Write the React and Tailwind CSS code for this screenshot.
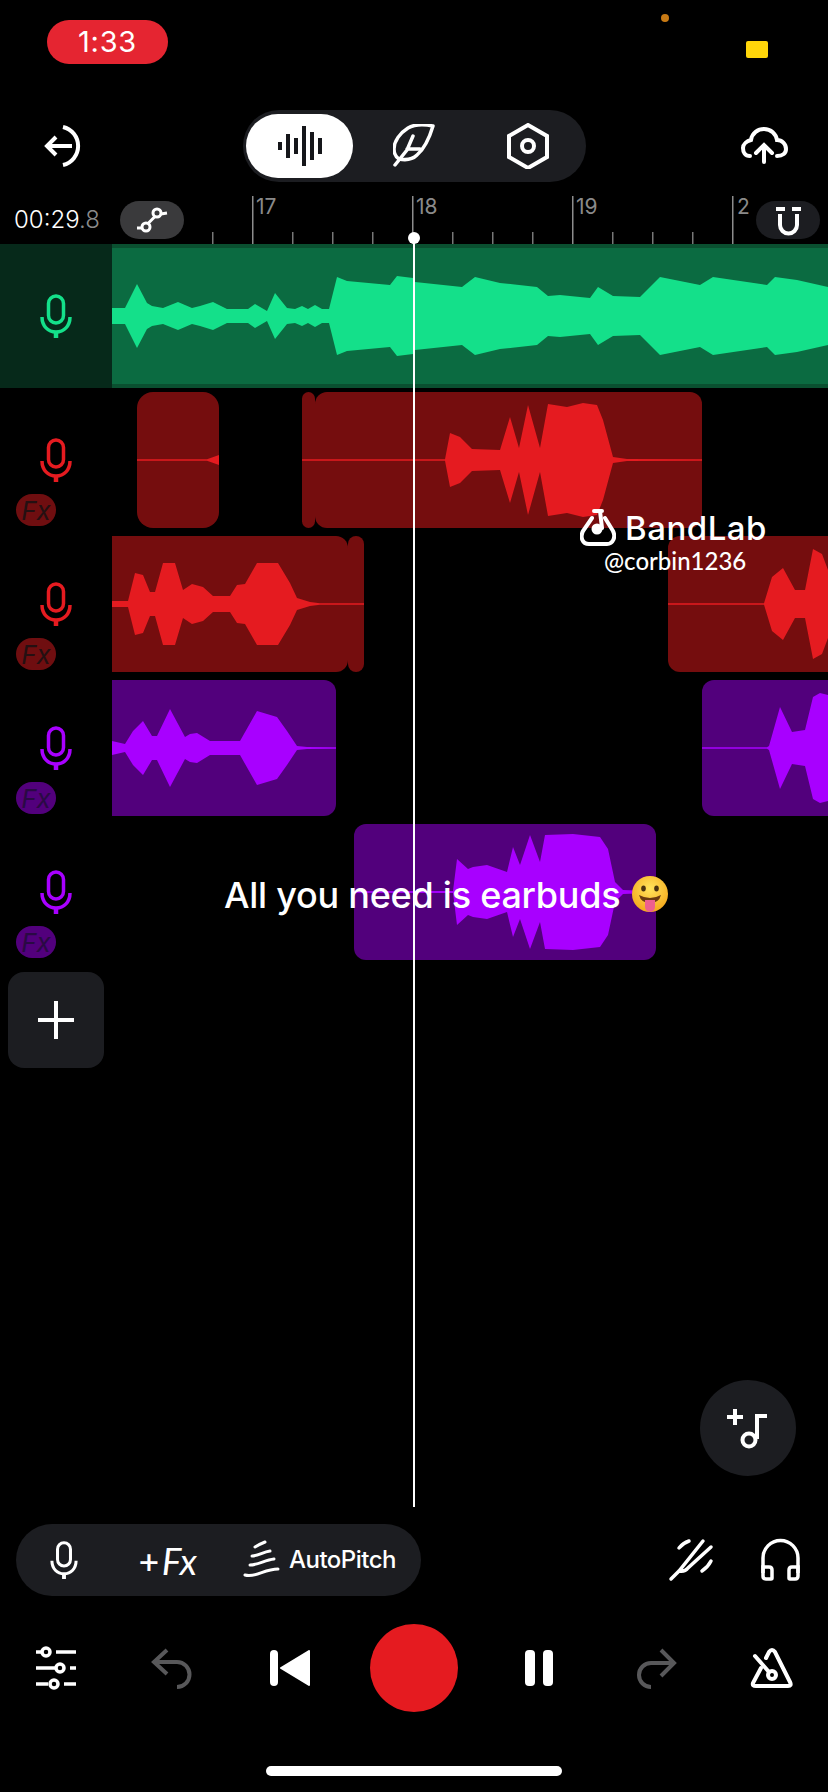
import React from "react";

const sans = "font-['Inter','Liberation_Sans',sans-serif]";

// waveforms: [screen x, half height], mirrored around the clip centre
const shape = (pts) => {
  const top = pts.map(([x, h]) => `${x} ${-h}`);
  const bottom = [...pts].reverse().map(([x, h]) => `${x} ${h}`);
  return `M${top.join("L")}L${bottom.join("L")}Z`;
};

const greenWave = [
  [112, 8], [125, 8], [137, 32], [147, 13], [152, 10], [163, 8], [178, 14], [192, 8], [200, 10], [213, 14],
  [227, 7], [248, 7], [255, 12], [267, 5], [275, 23], [287, 8], [295, 7], [302, 10], [308, 7], [315, 11],
  [322, 7], [329, 7], [337, 39], [347, 35], [390, 31], [397, 40], [413, 38], [415, 34], [462, 29], [475, 39],
  [500, 33], [537, 29], [548, 20], [560, 21], [590, 18], [598, 29], [613, 20], [640, 19], [660, 39], [700, 31],
  [713, 39], [767, 31], [775, 39], [797, 36], [828, 29],
];
const redWave1 = [
  [137, 0.75], [207, 0.75], [219, 5],
];
const redWave2 = [
  [302, 0.75], [315, 0.75], [445, 0.75], [450, 27], [460, 23], [472, 11], [500, 10], [510, 43], [519, 12],
  [528, 55], [540, 12], [548, 56], [567, 53], [583, 57], [597, 55], [603, 40], [613, 3], [627, 1], [702, 0.75],
];
const redWave3 = [
  [112, 3], [128, 3], [135, 31], [143, 29], [150, 12], [155, 12], [163, 41], [175, 41], [183, 14], [192, 20],
  [203, 17], [213, 8], [230, 8], [237, 19], [245, 20], [257, 41], [278, 41], [290, 21], [297, 6], [310, 2],
  [320, 0.75], [348, 0.75],
];
const redWave4 = [
  [668, 0.75], [764, 0.75], [772, 27], [783, 36], [795, 14], [805, 14], [813, 55], [822, 50], [828, 34],
];
const purpleWave1 = [
  [112, 7], [125, 4], [133, 17], [143, 27], [152, 12], [157, 12], [170, 39], [185, 11], [190, 14], [197, 15],
  [210, 7], [240, 7], [257, 37], [277, 31], [287, 17], [297, 2], [307, 1], [336, 0.75],
];
const purpleWave2 = [
  [702, 0.75], [767, 0.75], [769, 2], [780, 41], [792, 16], [805, 18], [813, 51], [820, 55], [828, 53],
];
const purpleWave3 = [
  [354, 0.75], [453, 1], [457, 33], [468, 23], [473, 25], [487, 27], [507, 20], [513, 45], [520, 27], [530, 57],
  [540, 30], [545, 57], [573, 58], [600, 55], [608, 43], [615, 10], [623, 2], [656, 0.75],
];

const Clip = ({ className, x, w, points, fill }) => (
  <div className={`h-[136px] shrink-0 overflow-hidden ${className}`}>
    <svg viewBox={`${x} -68 ${w} 136`} className="block w-full h-full">
      <path d={shape(points)} fill={fill} />
    </svg>
  </div>
);

const Mic = ({ className, color }) => (
  <svg viewBox="0 0 32 44" fill="none" stroke={color} strokeWidth="3.5" className={className}>
    <rect x="8.5" y="2" width="15" height="27" rx="7.5" />
    <path d="M2 23c0 9 6 15 14 15s14-6 14-15" />
    <path d="M16 38v6" strokeWidth="4.5" />
  </svg>
);

const TrackHead = ({ color, fxBg, fxText }) => (
  <div className="relative w-[112px] h-[144px] shrink-0 flex justify-center items-center">
    <Mic className="w-8 h-11" color={color} />
    <div className={`absolute left-4 top-[106px] w-10 h-8 rounded-full flex items-center justify-center text-[26px] italic ${sans} ${fxBg} ${fxText}`}>
      Fx
    </div>
  </div>
);

const RED = "#e51b20";
const PURPLE = "#a800ff";
const GREEN = "#14e08a";

export default function App() {
  return (
    <div className={`relative w-[828px] h-[1792px] overflow-hidden bg-black text-white flex flex-col ${sans}`}>
      {/* status bar */}
      <div className="h-[110px] shrink-0 flex items-start">
        <div className="ml-[47px] mt-5 w-[121px] h-11 rounded-full bg-[#e52531] flex items-center justify-center text-[29px] tracking-wide">
          1:33
        </div>
        <div className="ml-[493px] mt-[14px] w-2 h-2 rounded-full bg-[#c87a14]" />
        <div className="ml-[77px] mt-[41px] w-[22px] h-[17px] rounded-[2px] bg-[#ffd60a]" />
      </div>

      {/* top toolbar */}
      <div className="h-[72px] shrink-0 flex items-center">
        <svg viewBox="44 124 44 44" fill="none" stroke="white" strokeWidth="4" className="ml-[44px] w-11 h-11">
          <path d="M46 146h26M56 137l-9 9 9 9" />
          <path d="M63 127a19.5 19.5 0 0 1 0 38" />
        </svg>
        <div className="ml-[155px] w-[343px] h-[72px] rounded-full bg-[#1c1d21] flex items-center">
          <div className="ml-[3px] w-[107px] h-16 rounded-full bg-white flex items-center justify-center gap-1">
            {[8, 24, 16, 40, 28, 16].map((h, i) => (
              <div key={i} className="w-1 bg-[#15161a]" style={{ height: h }} />
            ))}
          </div>
          <svg viewBox="393 124 42 44" fill="none" stroke="white" strokeWidth="3.5" strokeLinecap="round" strokeLinejoin="round" className="ml-[40px] w-[42px] h-11">
            <path d="M433 126c-9-2-18-2-25 2-8 5-14 13-14 21 0 4 2 8 5 10 5 1 13 1 18-4 7-6 13-19 16-29z" />
            <path d="M395 165l12-15 6-14M407 149h13" />
          </svg>
          <svg viewBox="506 123 44 46" fill="none" stroke="white" strokeWidth="4" className="ml-[71px] w-11 h-[46px]">
            <path d="M528 125l19 11v21l-19 11-19-11v-21z" />
            <circle cx="528" cy="146" r="6" />
          </svg>
        </div>
        <svg viewBox="740 127 48 38" fill="none" stroke="white" strokeWidth="4" strokeLinecap="round" className="ml-[154px] w-12 h-[38px]">
          <path d="M750 156c-5 0-7-4-7-8 0-4 4-7 8-8 1-7 7-11 13-11 7 0 12 5 13 11 5 0 9 4 9 9 0 4-3 7-9 7" />
          <path d="M764 162v-16M756 153l8-8 8 8" />
        </svg>
      </div>

      {/* ruler */}
      <div className="relative mt-[14px] h-12 shrink-0 flex items-center">
        <svg viewBox="0 196 828 48" className="absolute inset-0 w-full h-full">
          {[212, 292, 332, 372, 452, 492, 532, 612, 652, 692].map((x) => (
            <rect key={x} x={x} y="232" width="1.5" height="12" fill="#777" />
          ))}
          {[252, 412, 572, 732].map((x) => (
            <rect key={x} x={x} y="196" width="1.5" height="48" fill="#8c8c8c" />
          ))}
        </svg>
        <span className="absolute left-[256px] top-[-5px] text-[21px] text-[#8a8a8a]">17</span>
        <span className="absolute left-[416px] top-[-5px] text-[21px] text-[#8a8a8a]">18</span>
        <span className="absolute left-[576px] top-[-5px] text-[21px] text-[#8a8a8a]">19</span>
        <span className="absolute left-[737px] top-[-5px] text-[21px] text-[#8a8a8a]">2</span>
        <div className="relative ml-[14px] w-[84px] text-[24px] font-light whitespace-nowrap">
          00:29<span className="text-[#8a8a8a]">.8</span>
        </div>
        <div className="relative ml-[22px] w-16 h-[38px] rounded-full bg-[#3a3a3c] flex items-center justify-center">
          <svg viewBox="134 206 36 26" fill="none" stroke="white" strokeWidth="3" className="w-9 h-[26px]">
            <circle cx="146" cy="226" r="4" />
            <circle cx="157" cy="212" r="4" />
            <path d="M148 222.500l7-7M137 227h5M161 213l6-1" />
          </svg>
        </div>
        <div className="relative ml-auto mr-2 w-16 h-[38px] rounded-full bg-[#1c1d21] flex items-center justify-center">
          <svg viewBox="773 203 30 32" fill="none" stroke="white" strokeWidth="4" className="w-[30px] h-8">
            <path d="M776 208h9M792 208h9M780 213v11a8.500 8.500 0 0 0 17 0v-11" />
          </svg>
        </div>
      </div>

      {/* tracks */}
      <div className="h-[144px] shrink-0 flex bg-[#0a5030]">
        <div className="w-[112px] h-[144px] shrink-0 bg-[#06291a] flex items-center justify-center">
          <Mic className="w-8 h-11" color={GREEN} />
        </div>
        <div className="flex-1 flex items-center">
          <Clip className="w-[716px] bg-[#0b6b41]" x={112} w={716} points={greenWave} fill={GREEN} />
        </div>
      </div>

      <div className="h-[144px] shrink-0 flex">
        <TrackHead color={RED} fxBg="bg-[#6f0e10]" fxText="text-[#241012]" />
        <div className="flex-1 flex items-center overflow-hidden">
          <Clip className="ml-[25px] w-[82px] rounded-2xl bg-[#750d0e]" x={137} w={82} points={redWave1} fill={RED} />
          <Clip className="ml-[83px] w-[13px] rounded-lg bg-[#750d0e]" x={302} w={13} points={[[302, 0.75], [315, 0.75]]} fill={RED} />
          <Clip className="w-[387px] rounded-xl bg-[#750d0e]" x={315} w={387} points={redWave2} fill={RED} />
        </div>
      </div>

      <div className="h-[144px] shrink-0 flex">
        <TrackHead color={RED} fxBg="bg-[#6f0e10]" fxText="text-[#241012]" />
        <div className="flex-1 flex items-center overflow-hidden">
          <Clip className="w-[236px] rounded-r-xl bg-[#750d0e]" x={112} w={236} points={redWave3} fill={RED} />
          <Clip className="w-4 rounded-lg bg-[#750d0e]" x={348} w={16} points={[[348, 0.75], [364, 0.75]]} fill={RED} />
          <Clip className="ml-[304px] w-[160px] rounded-l-xl bg-[#750d0e]" x={668} w={160} points={redWave4} fill={RED} />
        </div>
      </div>

      <div className="h-[144px] shrink-0 flex">
        <TrackHead color={PURPLE} fxBg="bg-[#52007c]" fxText="text-[#2a0a44]" />
        <div className="flex-1 flex items-center overflow-hidden">
          <Clip className="w-[224px] rounded-r-xl bg-[#52007c]" x={112} w={224} points={purpleWave1} fill={PURPLE} />
          <Clip className="ml-[366px] w-[126px] rounded-l-xl bg-[#52007c]" x={702} w={126} points={purpleWave2} fill={PURPLE} />
        </div>
      </div>

      <div className="h-[144px] shrink-0 flex">
        <TrackHead color={PURPLE} fxBg="bg-[#52007c]" fxText="text-[#2a0a44]" />
        <div className="flex-1 flex items-center overflow-hidden">
          <Clip className="ml-[242px] w-[302px] rounded-xl bg-[#52007c]" x={354} w={302} points={purpleWave3} fill={PURPLE} />
        </div>
      </div>

      {/* add track */}
      <div className="ml-2 mt-2 w-24 h-24 shrink-0 rounded-2xl bg-[#1c1d21] flex items-center justify-center">
        <svg viewBox="0 0 36 38" stroke="white" strokeWidth="4" className="w-9 h-[38px]">
          <path d="M0 19h36M18 0v38" />
        </svg>
      </div>

      {/* add instrument */}
      <div className="mt-[312px] mr-8 self-end w-24 h-24 shrink-0 rounded-full bg-[#1c1d21] flex items-center justify-center">
        <svg viewBox="726 1406 46 42" fill="none" stroke="white" strokeWidth="4" className="w-[46px] h-[42px]">
          <path d="M728 1416h16M736 1408v16" />
          <path d="M758 1438v-23h10" />
          <circle cx="750" cy="1439" r="6.500" />
        </svg>
      </div>

      {/* record options */}
      <div className="mt-12 h-[72px] shrink-0 flex items-center">
        <div className="ml-4 w-[405px] h-[72px] rounded-full bg-[#1c1d21] flex items-center">
          <Mic className="ml-[34px] w-[28px] h-[38px]" color="white" />
          <span className="ml-[59px] text-[36px] leading-none">+</span>
          <span className="ml-[1px] text-[37px] leading-none italic font-['Lato',sans-serif]">Fx</span>
          <svg viewBox="241 1540 37 40" fill="none" stroke="white" strokeWidth="3" strokeLinecap="round" className="ml-[46px] w-[37px] h-10">
            <path d="M253 1547q5-3 10-5" />
            <path d="M250 1556c6 0 11-4 18-5" />
            <path d="M248 1565c8 0 15-5 24-6" />
            <path d="M243 1575c11 3 19-6 33-6" />
          </svg>
          <span className="ml-[9px] text-[24px] font-medium tracking-[-0.5px]">AutoPitch</span>
        </div>
        <svg viewBox="668 1538 46 46" fill="none" stroke="white" strokeWidth="3.500" strokeLinecap="round" className="ml-[247px] w-[46px] h-[46px]">
          <path d="M671 1580l8-8 24-30M679 1572q6 1 9-3l23-21" />
          <path d="M679 1549q4-5 10-7M702 1572q6-4 9-10" />
        </svg>
        <svg viewBox="758 1536 44 46" fill="none" stroke="white" strokeWidth="3.500" className="ml-[44px] w-11 h-[46px]">
          <path d="M763 1572v-15a17.500 17.500 0 0 1 35 0v15" />
          <path d="M763 1566h6q3 0 3 3v8q0 1-1 1h-5q-3 0-3-3zM798 1566h-6q-3 0-3 3v8q0 1 1 1h5q3 0 3-3z" />
        </svg>
      </div>

      {/* transport */}
      <div className="mt-7 h-[88px] shrink-0 flex items-center">
        <svg viewBox="34 1646 44 44" fill="none" stroke="white" strokeWidth="3.500" className="ml-[34px] w-11 h-11">
          <path d="M36 1652h5M56 1652h20M36 1668h20M70 1668h6M36 1684h12M64 1684h12" />
          <circle cx="46" cy="1652" r="4" />
          <circle cx="60" cy="1668" r="4" />
          <circle cx="54" cy="1684" r="4" />
        </svg>
        <svg viewBox="151 1646 44 44" fill="none" stroke="#58585a" strokeWidth="4" className="ml-[73px] w-11 h-11">
          <path d="M167 1650l-13 12 13 12M154 1662h23a12.500 12.500 0 0 1 0 25" />
        </svg>
        <div className="ml-[75px] w-10 flex items-center">
          <div className="w-2 h-9 rounded-sm bg-white" />
          <svg viewBox="0 0 31 36" fill="white" stroke="white" strokeWidth="2" strokeLinejoin="round" className="ml-[1px] w-[31px] h-9">
            <path d="M2 18L30 1v34z" />
          </svg>
        </div>
        <div className="ml-[60px] w-[88px] h-[88px] rounded-full bg-[#e51b20]" />
        <div className="ml-[67px] w-[28px] flex justify-between">
          <div className="w-[10px] h-9 rounded-sm bg-white" />
          <div className="w-[10px] h-9 rounded-sm bg-white" />
        </div>
        <svg viewBox="633 1646 44 44" fill="none" stroke="#58585a" strokeWidth="4" className="ml-[80px] w-11 h-11">
          <path d="M661 1650l13 13-13 13M674 1663h-23a12 12 0 0 0 0 24" />
        </svg>
        <svg viewBox="750 1646 44 44" fill="none" stroke="white" strokeWidth="4" strokeLinecap="round" className="ml-[73px] w-11 h-11">
          <path d="M761 1668l-8 15q-1 3 3 3h32q4 0 2-4l-15-30q-3-4-6 0l-3 6" />
          <path d="M755 1656l14 16" />
          <circle cx="772" cy="1675" r="4" />
        </svg>
      </div>

      {/* home indicator */}
      <div className="mt-[54px] w-[296px] h-[10px] shrink-0 self-center rounded-full bg-white" />

      {/* playhead */}
      <div className="absolute left-[413px] top-[238px] w-[2px] h-[1269px] bg-white" />
      <div className="absolute left-[408px] top-[232px] w-3 h-3 rounded-full bg-white" />

      {/* watermark */}
      <div className="absolute left-[580px] top-[509px] flex items-center gap-[9px]">
        <svg viewBox="0 0 36 38" fill="none" stroke="white" strokeWidth="4" strokeLinecap="round" className="w-9 h-[38px]">
          <path d="M12 9L3 22c-3 6-1 13 6 13h18c6 0 9-7 6-13L25 9" />
          <path d="M14 2h8M20 2l2 17" />
          <circle cx="17" cy="20" r="3.500" fill="white" />
        </svg>
        <span className="text-[33px] font-medium leading-none tracking-[0.5px]">BandLab</span>
      </div>
      <div className="absolute left-[604px] top-[547px] text-[24px] font-medium leading-[28px] font-['Lato',sans-serif]">
        @corbin1236
      </div>

      {/* caption */}
      <div className="absolute left-[224px] top-[874px] flex items-center gap-3">
        <span className="text-[36px] leading-[42px] font-medium tracking-[-0.25px] whitespace-nowrap">All you need is earbuds</span>
        <svg viewBox="0 0 36 38" className="w-9 h-[38px]">
          <defs>
            <radialGradient id="face" cx="50%" cy="35%" r="65%">
              <stop offset="0%" stopColor="#ffe45c" />
              <stop offset="100%" stopColor="#f5a81c" />
            </radialGradient>
          </defs>
          <circle cx="18" cy="18" r="18" fill="url(#face)" />
          <ellipse cx="11.500" cy="12.500" rx="2.300" ry="3" fill="#4a3210" />
          <ellipse cx="24.500" cy="12.500" rx="2.300" ry="3" fill="#4a3210" />
          <path d="M7 19q11 6 22 0q-2 8-11 8t-11-8z" fill="#6b3a10" />
          <path d="M13 24h10v7a5 5 0 0 1-10 0z" fill="#ee5f8f" />
        </svg>
      </div>
    </div>
  );
}
